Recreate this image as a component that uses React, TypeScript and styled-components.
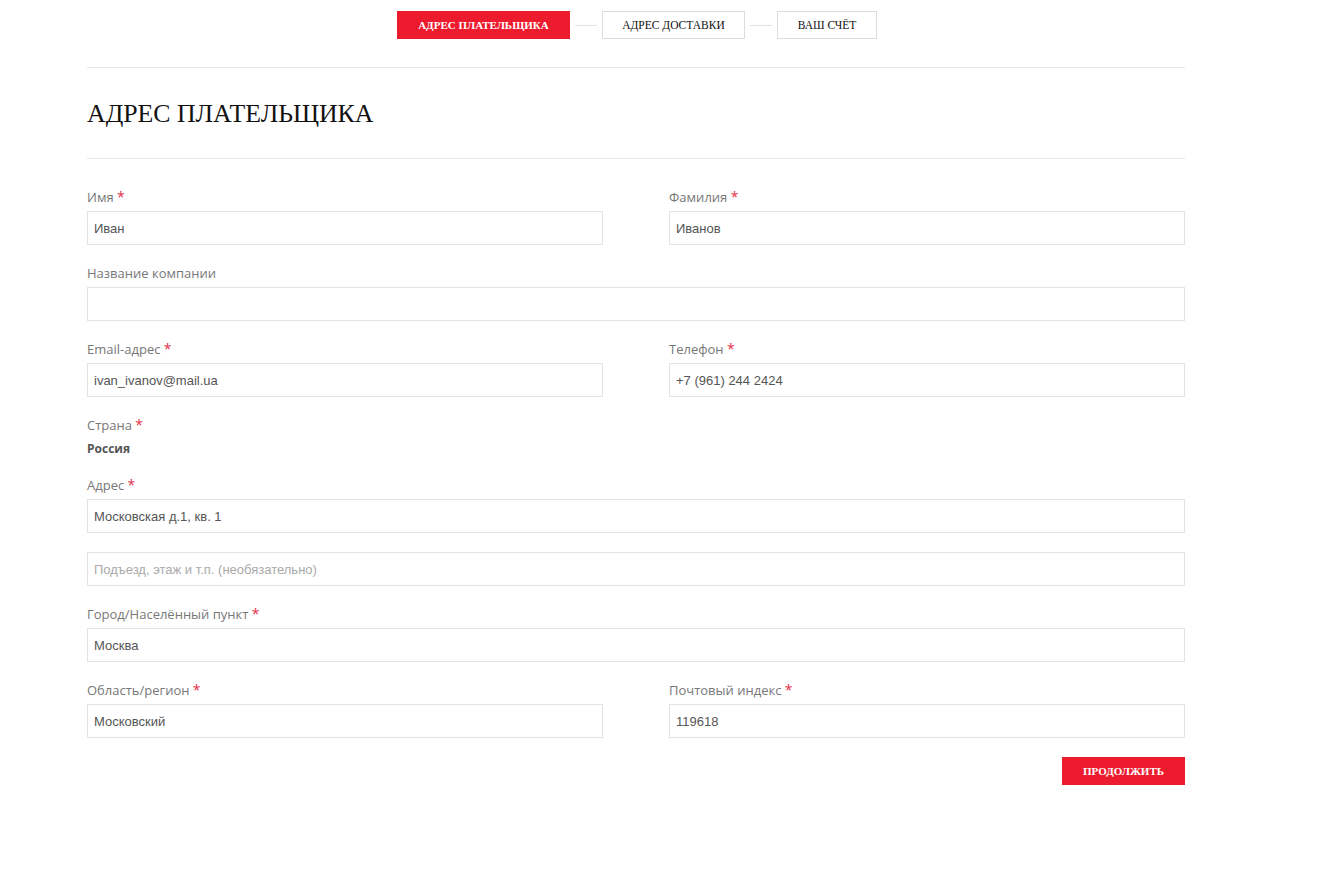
import { createGlobalStyle } from "styled-components";
import styled from "styled-components";

const GlobalStyle = createGlobalStyle`
  html, body {
    margin: 0;
    padding: 0;
    background: #fff;
  }
  * {
    box-sizing: border-box;
  }
`;

const RED = "#ed1b2e";

const steps = [
  { title: "Адрес плательщика", active: true },
  { title: "Адрес доставки", active: false },
  { title: "Ваш счёт", active: false },
];

const App = () => {
  return (
    <>
      <GlobalStyle />
      <Container>
        <Steps>
          {steps.map((step, index) => (
            <StepItem key={step.title}>
              {index > 0 && <Connector />}
              <Step $active={step.active}>{step.title}</Step>
            </StepItem>
          ))}
        </Steps>
        <Divider />
        <Title>Адрес плательщика</Title>
        <Divider />
        <Form>
          <Row>
            <Field>
              <Label>
                Имя <Required>*</Required>
              </Label>
              <Input defaultValue="Иван" />
            </Field>
            <Field>
              <Label>
                Фамилия <Required>*</Required>
              </Label>
              <Input defaultValue="Иванов" />
            </Field>
          </Row>
          <Field>
            <Label>Название компании</Label>
            <Input defaultValue="" />
          </Field>
          <Row>
            <Field>
              <Label>
                Email-адрес <Required>*</Required>
              </Label>
              <Input defaultValue="ivan_ivanov@mail.ua" />
            </Field>
            <Field>
              <Label>
                Телефон <Required>*</Required>
              </Label>
              <Input defaultValue="+7 (961) 244 2424" />
            </Field>
          </Row>
          <Field $gap={5} $bottom={17}>
            <Label>
              Страна <Required>*</Required>
            </Label>
            <StaticValue>Россия</StaticValue>
          </Field>
          <Field $bottom={19}>
            <Label>
              Адрес <Required>*</Required>
            </Label>
            <Input defaultValue="Московская д.1, кв. 1" />
          </Field>
          <Field $bottom={18}>
            <Input placeholder="Подъезд, этаж и т.п. (необязательно)" />
          </Field>
          <Field $bottom={18}>
            <Label>
              Город/Населённый пункт <Required>*</Required>
            </Label>
            <Input defaultValue="Москва" />
          </Field>
          <Row>
            <Field $bottom={19}>
              <Label>
                Область/регион <Required>*</Required>
              </Label>
              <Input defaultValue="Московский" />
            </Field>
            <Field $bottom={19}>
              <Label>
                Почтовый индекс <Required>*</Required>
              </Label>
              <Input defaultValue="119618" />
            </Field>
          </Row>
          <Actions>
            <SubmitButton type="button">Продолжить</SubmitButton>
          </Actions>
        </Form>
      </Container>
    </>
  );
};

const Container = styled.div`
  width: 1098px;
  margin: 0 0 0 87px;
  padding-top: 11px;
  padding-bottom: 100px;
`;

const Steps = styled.div`
  display: flex;
  justify-content: center;
  align-items: center;
  padding-left: 2px;
  margin-bottom: 28px;
`;

const StepItem = styled.div`
  display: flex;
  align-items: center;
`;

const Connector = styled.span`
  display: block;
  width: 22px;
  height: 1px;
  margin: 0 5px;
  background: #e3e3e3;
`;

const Step = styled.div<{ $active: boolean }>`
  height: 28px;
  padding: 0 ${(p) => (p.$active ? 20 : 19.5)}px;
  display: flex;
  align-items: center;
  font-family: "Liberation Serif", "Times New Roman", serif;
  font-size: ${(p) => (p.$active ? 11 : 11.5)}px;
  text-transform: uppercase;
  font-weight: ${(p) => (p.$active ? 700 : 400)};
  color: ${(p) => (p.$active ? "#fff" : "#111")};
  background: ${(p) => (p.$active ? RED : "#fff")};
  border: 1px solid ${(p) => (p.$active ? RED : "#dcdcdc")};
`;

const Divider = styled.hr`
  margin: 0;
  border: none;
  border-top: 1px solid #e8e8e8;
`;

const Title = styled.h1`
  margin: 0;
  height: 90px;
  display: flex;
  align-items: center;
  padding-top: 1px;
  font-family: "Liberation Serif", "Times New Roman", serif;
  font-weight: 400;
  font-size: 25.8px;
  color: #111;
  text-transform: uppercase;
`;

const Form = styled.form`
  display: flex;
  flex-direction: column;
  padding-top: 28px;
`;

const Row = styled.div`
  display: grid;
  grid-template-columns: 516px 516px;
  column-gap: 66px;
`;

const Field = styled.div<{ $gap?: number; $bottom?: number }>`
  display: flex;
  flex-direction: column;
  gap: ${(p) => p.$gap ?? 4}px;
  margin-bottom: ${(p) => p.$bottom ?? 18}px;
`;

const Label = styled.label`
  font-family: "Open Sans", "Noto Sans", sans-serif;
  font-size: 13px;
  line-height: 20px;
  color: #777;
`;

const Required = styled.span`
  color: #e2304a;
  font-size: 14px;
`;

const StaticValue = styled.div`
  font-family: "Open Sans", "Noto Sans", sans-serif;
  font-size: 12px;
  font-weight: 700;
  line-height: 18px;
  color: #555;
`;

const Input = styled.input`
  width: 100%;
  height: 34px;
  padding: 0 6px;
  border: 1px solid #e3e3e3;
  border-radius: 0;
  background: #fff;
  font-family: "Liberation Sans", Arial, sans-serif;
  font-size: 13px;
  color: #555;
  outline: none;

  &::placeholder {
    color: #a9a9a9;
  }
`;

const Actions = styled.div`
  display: flex;
  justify-content: flex-end;
`;

const SubmitButton = styled.button`
  width: 123px;
  height: 28px;
  border: none;
  background: ${RED};
  color: #fff;
  font-family: "Liberation Serif", "Times New Roman", serif;
  font-size: 11px;
  font-weight: 700;
  text-transform: uppercase;
  cursor: pointer;
`;

export default App;
